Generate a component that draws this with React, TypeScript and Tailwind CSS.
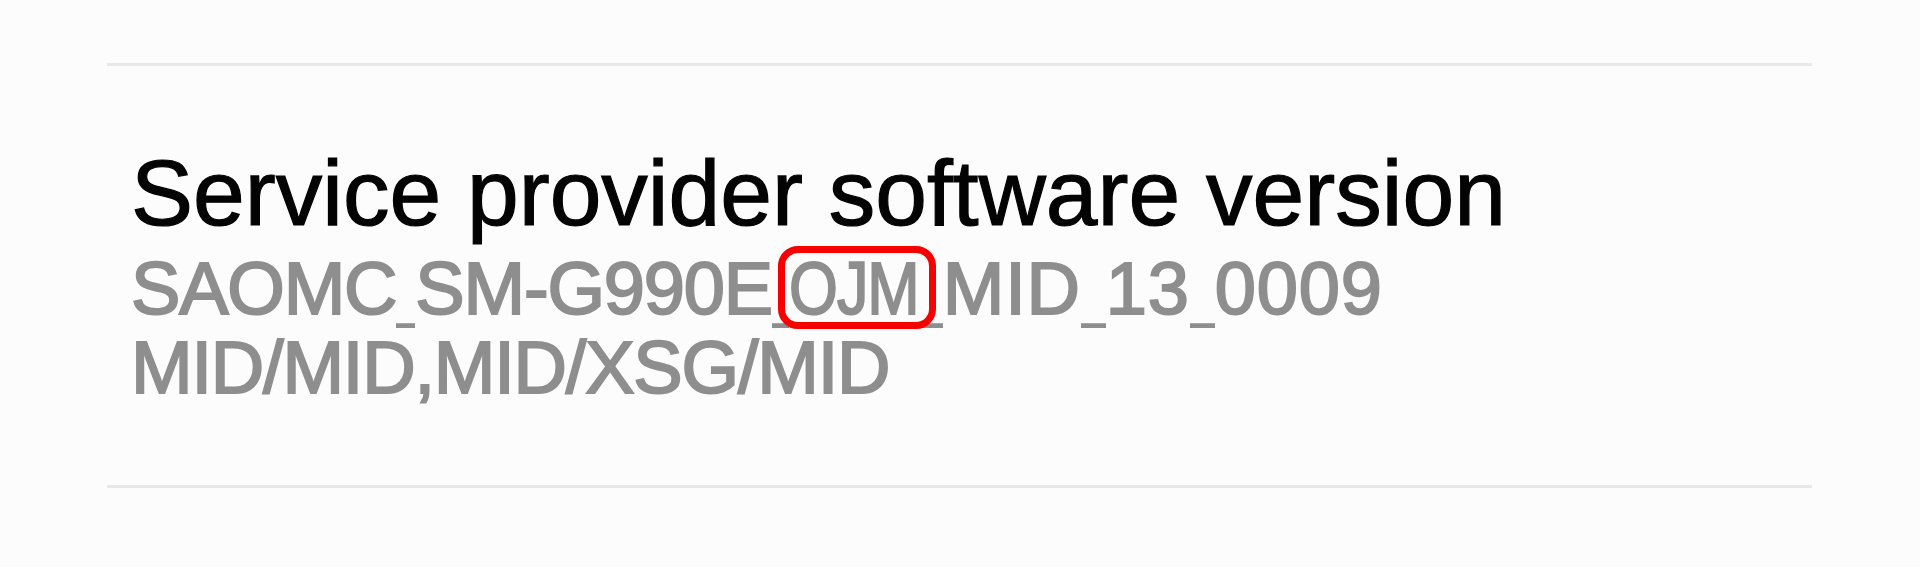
function U({ w = "w-[21px]" }: { w?: string }) {
  return <span className={"inline-block align-top h-[79px] overflow-hidden " + w}>_</span>;
}

export default function App() {
  return (
    <div className="w-full h-[567px] bg-[#fcfcfc] pt-[63px] overflow-hidden" style={{ fontFamily: '"Liberation Sans", Arial, sans-serif' }}>
      <div className="ml-[107px] w-[1705px] border-t-[3px] border-b-[3px] border-[#e8e8e8] pt-[71px] pb-[78px] pl-[24px]">
        <div className="text-[93px] leading-[112px] text-[#030303] [-webkit-text-stroke:1.2px_#030303]">Service provider software version</div>
        <div className="text-[74px] leading-[79px] text-[#8e8e8e] tracking-[-1.2px] [-webkit-text-stroke:2px_#8e8e8e]">
          <div className="whitespace-nowrap">
            SAOMC<U w="w-[19px]" />SM-G990E<U w="w-[17px]" />
            <span className="relative inline-block w-[129px]">
              <span className="inline-block origin-left scale-x-[0.85]">OJM</span>
              <span className="absolute left-[-11px] right-[-18px] top-[-3px] bottom-[-1px] border-[7px] border-[#f70000] rounded-[20px]" />
            </span>
            <span className="tracking-[0.8px]">
              <U w="w-[25px]" />MID<U w="w-[25px]" />13<U w="w-[25px]" />0009
            </span>
          </div>
          <div className="whitespace-nowrap">MID/MID,MID/XSG/MID</div>
        </div>
      </div>
    </div>
  );
}
